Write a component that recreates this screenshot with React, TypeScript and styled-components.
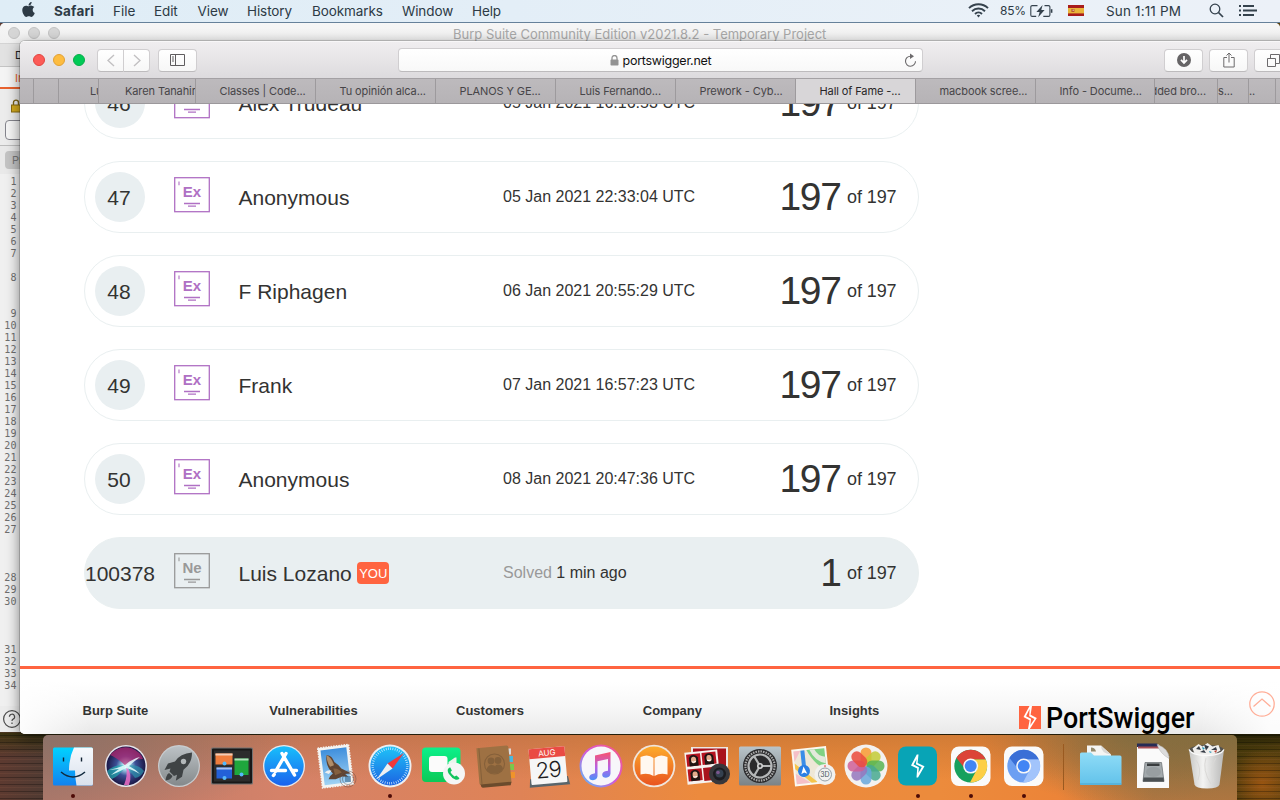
import React from 'react';
import styled, { createGlobalStyle, css } from 'styled-components';
import { FaApple } from 'react-icons/fa';

const Global = createGlobalStyle`
  * { box-sizing: border-box; }
  html, body { margin: 0; padding: 0; overflow: hidden; }
  body { font-family: "Liberation Sans", Arial, sans-serif; color: #333332; }
  svg { display: block; }
`;

const ui = css`
  font-family: Inter, "Helvetica Neue", sans-serif;
`;

const Desktop = styled.div`
  position: relative;
  width: 1280px;
  height: 800px;
  overflow: hidden;
  background:
    repeating-linear-gradient(180deg, rgba(0, 0, 0, 0.28) 0 1px, transparent 1px 3px, rgba(190, 120, 90, 0.1) 3px 4px, transparent 4px 7px),
    radial-gradient(ellipse 36px 34px at 1262px 784px, rgba(200, 100, 20, 0.6), transparent),
    linear-gradient(180deg, transparent 732px, rgba(50, 48, 8, 0.8) 733px, transparent 756px),
    linear-gradient(90deg, #5d3a30 0, #4f3a32 44px, #6f5c50 200px, #8a4b22 1100px, #4a3a0c 1240px, #5a4210 1280px);
`;

const MenuBar = styled.header`
  ${ui}
  height: 23px;
  display: flex;
  align-items: center;
  justify-content: space-between;
  padding: 0 23px 1px 20px;
  font-size: 13.5px;
  color: #2d3a45;
  background: linear-gradient(90deg, #dfedf6, #e3eef7 40%, #eaf1f8 80%, #ecf1f8);
  border-bottom: 1px solid #66819a;
`;

const MenuGroup = styled.div`
  display: flex;
  align-items: center;
  height: 22px;
`;

const MenuItem = styled.span<{ $w: number; $bold?: boolean; $ls?: number }>`
  width: ${p => p.$w}px;
  white-space: nowrap;
  font-weight: ${p => (p.$bold ? 700 : 400)};
  letter-spacing: ${p => p.$ls ?? 0}px;
`;

const AppleMark = styled.span`
  width: 34px;
  padding-bottom: 2px;
`;

const StatusIcon = styled.span<{ $gap: number }>`
  margin-left: ${p => p.$gap}px;
`;

const StatusText = styled.span<{ $gap: number; $size: number; $w: number; $ls: number }>`
  margin-left: ${p => p.$gap}px;
  font-size: ${p => p.$size}px;
  width: ${p => p.$w}px;
  letter-spacing: ${p => p.$ls}px;
  white-space: nowrap;
`;

const BurpWindow = styled.section`
  ${ui}
  position: absolute;
  left: 0;
  top: 23px;
  width: 1280px;
  height: 709px;
  background: #ececec;
  border-radius: 5px 5px 0 0;
  overflow: hidden;
`;

const BurpTitle = styled.div`
  height: 21px;
  display: flex;
  align-items: center;
  background: linear-gradient(#f6f6f6, #f0f0f0);
  border-bottom: 1px solid #d4d4d4;
  padding-left: 8px;
`;

const DimLight = styled.i`
  width: 12px;
  height: 12px;
  border-radius: 50%;
  background: #d6d6d6;
  border: 1px solid #c3c3c3;
  margin-right: 8px;
`;

const BurpName = styled.span`
  margin-left: 385px;
  padding-top: 2px;
  font-size: 13px;
  color: #a9a9a9;
  white-space: nowrap;
`;

const BurpTab = styled.div<{ $hot?: boolean }>`
  height: ${p => (p.$hot ? 22 : 23)}px;
  padding-left: 15px;
  line-height: 22px;
  font-size: 11px;
  color: ${p => (p.$hot ? '#e8622f' : '#222')};
  background: ${p => (p.$hot ? '#f4f4f4' : '#e2e2e2')};
  border-bottom: ${p => (p.$hot ? '2px solid #e8622f' : '1px solid #c4c4c4')};
`;

const LockRow = styled.div`
  height: 31px;
  padding: 10px 0 0 11px;
`;

const BurpField = styled.div`
  margin-left: 5px;
  height: 20px;
  border: 1px solid #85858d;
  border-radius: 4px;
  background: #f5f5f5;
`;

const BurpPretty = styled.div`
  margin-top: 5px;
  border-top: 1px solid #bdbdbd;
  background: #e9e9e9;
  padding: 5px 0 5px 5px;
  height: 29px;
`;

const PrettyButton = styled.div`
  height: 18px;
  border-radius: 4px;
  background: #c4c4c4;
  color: #777;
  font-size: 11px;
  line-height: 19px;
  padding-left: 7px;
`;

const Gutter = styled.div`
  width: 20px;
  height: 532px;
  padding-top: 2px;
  background: #f0f0f0;
  font-family: "DejaVu Sans Mono", monospace;
  font-size: 10px;
  color: #6f6f6f;
`;

const LineNo = styled.div<{ $h: number }>`
  height: ${p => p.$h}px;
  line-height: 12px;
  letter-spacing: 0.4px;
  padding-right: 3px;
  text-align: right;
`;

const BurpHelp = styled.div`
  padding: 3px 0 0 2px;
  height: 26px;
`;

const Browser = styled.section`
  position: absolute;
  left: 20px;
  top: 41px;
  width: 1290px;
  height: 693px;
  display: flex;
  flex-direction: column;
  border-radius: 5px;
  overflow: hidden;
  background: #fff;
`;

const BrowserShadow = styled.div`
  position: absolute;
  left: 20px;
  top: 41px;
  width: 1290px;
  height: 693px;
  border-radius: 5px;
  box-shadow: 0 0 0 1px rgba(0, 0, 0, 0.16), 0 4px 14px rgba(0, 0, 0, 0.5);
`;

const Toolbar = styled.div`
  height: 37px;
  flex: none;
  display: flex;
  align-items: center;
  padding-left: 13px;
  background: linear-gradient(#f0eef0, #dddbde);
  border-top: 1px solid #f8f7f8;
`;

const Light = styled.i<{ $c: string; $b: string }>`
  width: 12px;
  height: 12px;
  border-radius: 50%;
  background: ${p => p.$c};
  border: 1px solid ${p => p.$b};
  margin-right: 8px;
`;

const ToolButton = styled.div<{ $w: number; $ml?: number; $side?: 'l' | 'r' }>`
  width: ${p => p.$w}px;
  height: 23px;
  flex: none;
  margin-left: ${p => p.$ml ?? 0}px;
  display: flex;
  align-items: center;
  justify-content: center;
  background: linear-gradient(#ffffff, #f7f7f7);
  border: 1px solid #d0ced0;
  border-bottom-color: #bdbbbd;
  border-left-width: ${p => (p.$side === 'r' ? 0 : 1)}px;
  border-radius: ${p => (p.$side === 'l' ? '4px 0 0 4px' : p.$side === 'r' ? '0 4px 4px 0' : '4px')};
`;

const Address = styled.div`
  ${ui}
  width: 525px;
  height: 24px;
  flex: none;
  margin-left: 201px;
  padding: 0 5px 0 211px;
  display: flex;
  align-items: center;
  font-size: 12.5px;
  color: #111;
  background: linear-gradient(#ffffff, #f8f8f8);
  border: 1px solid #d0ced0;
  border-bottom-color: #bdbbbd;
  border-radius: 4px;
`;

const Host = styled.span`
  flex: 1;
  padding-left: 3.5px;
  letter-spacing: -0.26px;
`;

const TabBar = styled.nav`
  ${ui}
  height: 26px;
  flex: none;
  display: flex;
  border-top: 1px solid #a4a1a4;
  border-bottom: 1px solid #9b989b;
  background: #bab7ba;
`;

const Tab = styled.div<{ $w: number; $active?: boolean; $pad?: number; $end?: boolean }>`
  width: ${p => p.$w}px;
  flex: none;
  height: 24px;
  overflow: hidden;
  display: flex;
  justify-content: ${p => (p.$end ? 'flex-end' : 'flex-start')};
  padding: ${p => (p.$end ? `0 ${p.$pad ?? 0}px 0 0` : `0 0 0 ${p.$pad ?? 23.5}px`)};
  line-height: 24px;
  font-size: 11px;
  white-space: nowrap;
  letter-spacing: -0.1px;
  color: ${p => (p.$active ? '#272527' : '#474548')};
  background: ${p => (p.$active ? '#d8d6d8' : 'linear-gradient(#bdbabd, #b6b3b6)')};
  border-right: 1px solid #9d9a9d;
`;

const Page = styled.main`
  flex: 1;
  overflow: hidden;
  display: flex;
  flex-direction: column;
`;

const Board = styled.div`
  width: 835px;
  margin: -37px 0 0 64px;
  display: flex;
  flex-direction: column;
  gap: 22px;
`;

const Row = styled.div<{ $me?: boolean }>`
  height: 72px;
  display: grid;
  grid-template-columns: 70px 64px 265px 1fr auto;
  align-items: center;
  padding-right: 21.5px;
  border: 1px solid #e9eff0;
  border-radius: 36px;
  background: ${p => (p.$me ? '#e9eff1' : '#fff')};
`;

const Rank = styled.div<{ $me?: boolean }>`
  width: ${p => (p.$me ? 70 : 50)}px;
  height: 50px;
  margin-left: ${p => (p.$me ? 0 : 10)}px;
  padding: ${p => (p.$me ? '1px 0 0 0' : '1px 2px 0 0')};
  border-radius: 25px;
  background: #e9eff1;
  display: flex;
  align-items: center;
  justify-content: center;
  font-size: 21px;
`;

const Badge = styled.div`
  padding: 0 0 4px 19px;
`;

const Name = styled.div`
  padding: 1px 0 0 19.5px;
  font-size: 21px;
  display: flex;
  align-items: center;
  white-space: nowrap;
`;

const You = styled.span`
  margin: -1px 0 0 5.5px;
  width: 32px;
  height: 22px;
  border-radius: 4px;
  background: #ff6440;
  color: #fff;
  font-size: 13px;
  line-height: 23px;
  text-align: center;
`;

const When = styled.div`
  padding-left: 19px;
  margin-top: -1px;
  font-size: 16px;
  white-space: nowrap;
`;

const Muted = styled.span`
  color: #999;
`;

const Score = styled.div`
  display: flex;
  align-items: center;
  font-size: 18px;
  white-space: nowrap;
`;

const Big = styled.span`
  font-size: 39px;
  line-height: 44px;
  letter-spacing: -1.2px;
  margin-right: 6.2px;
`;

const Of = styled.span`
  letter-spacing: -0.1px;
`;

const Footer = styled.footer`
  margin-top: 57px;
  height: 68px;
  flex: none;
  border-top: 3px solid #ff6440;
  display: flex;
  background:
    linear-gradient(90deg, rgba(255, 255, 255, 0.85), transparent 70px 1180px, rgba(255, 255, 255, 0.85) 1250px),
    linear-gradient(#fff 20%, #f7f7f7 60%, #e9e9e9);
`;

const FootHead = styled.div`
  width: 186.75px;
  flex: none;
  padding-top: 34px;
  font-size: 13px;
  font-weight: 700;
`;

const FootCols = styled.div`
  display: flex;
  padding-left: 62.5px;
  width: 999px;
  flex: none;
`;

const Logo = styled.div`
  display: flex;
  padding-top: 37px;
  width: 230px;
  flex: none;
`;

const LogoText = styled.span`
  font-family: Roboto, sans-serif;
  font-weight: 500;
  font-size: 29.5px;
  line-height: 24px;
  color: #000;
  margin-left: 5px;
  transform-origin: left;
  transform: scaleX(0.91);
  white-space: nowrap;
`;

const ToTop = styled.div`
  padding-top: 22px;
`;

const Dock = styled.div`
  position: absolute;
  left: 43px;
  top: 735px;
  width: 1194px;
  height: 65px;
  padding-left: 3.6px;
  display: flex;
  border-radius: 5px 5px 0 0;
  background:
    radial-gradient(ellipse 230px 90px at 100% 0, rgba(120, 108, 64, 0.75), transparent),
    radial-gradient(ellipse 150px 70px at 91% 0, rgba(125, 108, 66, 0.7), transparent),
    radial-gradient(ellipse 260px 90px at 0 0, rgba(138, 114, 106, 0.95), transparent),
    linear-gradient(180deg, rgba(150, 90, 40, 0.3), transparent 70%),
    linear-gradient(90deg, #b4796a 0, #d58269 20%, #df8356 40%, #ec8a3d 55%, #ec8b3c 75%, #ec8438 85%, #b97841 93%, #bb7840 100%);
`;

const DockCell = styled.div<{ $running?: boolean }>`
  width: 52.85px;
  flex: none;
  height: 65px;
  padding: 8.5px 0 0 4.4px;
  position: relative;
  ${p => p.$running && css`
    &::after {
      content: '';
      position: absolute;
      left: 24.4px;
      top: 59px;
      width: 4px;
      height: 4px;
      border-radius: 50%;
      background: #4d0b06;
    }
  `}
`;

const DockLine = styled.div`
  width: 1px;
  height: 46px;
  margin: 9px 11px 0 12px;
  background: #9a5a20;
`;

/* ---------- icons ---------- */

const Wifi = () => (
  <svg width="21" height="15" viewBox="0 0 21 15" fill="none" stroke="#35424d" strokeWidth="1.9">
    <path d="M1 5.2 A13.5 13.5 0 0 1 20 5.2" />
    <path d="M4 8.2 A9.3 9.3 0 0 1 17 8.2" />
    <path d="M7 11 A5 5 0 0 1 14 11" />
    <path d="M8.8 12.4 L10.5 14.4 L12.2 12.4 A2.6 2.6 0 0 0 8.8 12.4Z" fill="#35424d" stroke="none" />
  </svg>
);

const Battery = () => (
  <svg width="23" height="14" viewBox="0 0 23 14" fill="none" stroke="#35424d" strokeWidth="1.1">
    <path d="M7.5 1.6H2.2a1.4 1.4 0 0 0-1.4 1.4v8a1.4 1.4 0 0 0 1.4 1.4h4M14.5 1.6h4a1.4 1.4 0 0 1 1.4 1.4v8a1.4 1.4 0 0 1-1.4 1.4h-5.2" />
    <path d="M21.6 5.2v3.6" strokeWidth="1.6" />
    <path d="M12.6 1 6.4 8h3.2l-1.4 5.2L14.6 6h-3.3z" fill="#35424d" stroke="none" />
  </svg>
);

const Flag = () => (
  <svg width="16" height="11" viewBox="0 0 16 11">
    <rect width="16" height="11" fill="#a81c1c" />
    <rect y="3" width="16" height="5.4" fill="#e9b53a" />
    <rect x="3.4" y="4" width="3" height="3" fill="#b8562e" />
    <rect x="4.6" y="4.6" width="1.2" height="1.2" fill="#f2dcc0" />
  </svg>
);

const Search = () => (
  <svg width="15" height="15" viewBox="0 0 15 15" fill="none" stroke="#35424d" strokeWidth="1.3">
    <circle cx="6" cy="6" r="4.8" />
    <path d="M9.5 9.5 14 14" strokeWidth="1.7" />
  </svg>
);

const ListIcon = () => (
  <svg width="18" height="12" viewBox="0 0 18 12" fill="#35424d">
    <path d="M0 0h2v2H0zM4 0h11v2H4zM0 4.5h2v2H0zM4 4.5h14v2H4zM0 9h2v2H0zM4 9h11v2H4z" />
  </svg>
);

const Chevron = ({ flip }: { flip?: boolean }) => (
  <svg width="8" height="13" viewBox="0 0 8 13" fill="none" stroke="#c2c0c2" strokeWidth="1.4">
    <path d={flip ? 'M1 1 7 6.5 1 12' : 'M7 1 1 6.5 7 12'} />
  </svg>
);

const Sidebar = () => (
  <svg width="15" height="12" viewBox="0 0 15 12" fill="none" stroke="#5f5d5f" strokeWidth="1">
    <path d="M.5.5h14v11H.5zM5.5.5v11M2 3h2M2 5h2M2 7h2" />
  </svg>
);

const Padlock = () => (
  <svg width="9" height="11" viewBox="0 0 9 11">
    <rect x="0.5" y="4.6" width="8" height="6" rx="0.8" fill="#939393" />
    <path d="M2 5V3a2.5 2.5 0 0 1 5 0v2" fill="none" stroke="#939393" strokeWidth="1.3" />
  </svg>
);

const Reload = () => (
  <svg width="13" height="15" viewBox="0 0 13 15" fill="none" stroke="#6c6a6c" strokeWidth="1.1">
    <path d="M7 3.2H6.4A5 5 0 1 0 11.5 8.2" />
    <path d="M6 .4 10 3.2 6 6z" fill="#6c6a6c" stroke="none" />
  </svg>
);

const Download = () => (
  <svg width="14" height="14" viewBox="0 0 14 14">
    <circle cx="7" cy="7" r="7" fill="#666466" />
    <path d="M7 3v6.5M4 6.8 7 10l3-3.2" fill="none" stroke="#fff" strokeWidth="1.7" />
  </svg>
);

const Share = () => (
  <svg width="12" height="16" viewBox="0 0 12 16" fill="none" stroke="#6c6a6c" strokeWidth="1">
    <path d="M4 5.5H.8v9.500h10.400V5.500H8M6 10.500V1M3.500 3.500 6 1l2.500 2.500" />
  </svg>
);

const TabsIcon = () => (
  <svg width="13" height="13" viewBox="0 0 13 13" fill="none" stroke="#6c6a6c" strokeWidth="1">
    <path d="M.5 4.500h8v8h-8zM3.500 4.500v-4h9v9h-4" />
  </svg>
);

const LevelBadge = ({ code, color }: { code: string; color: string }) => (
  <svg width="36" height="36" viewBox="0 0 36 36" fill="none" stroke={color}>
    <rect x="0.7" y="0.7" width="34.6" height="34" strokeWidth="1.3" />
    <path d="M5 4.500v3.700" strokeWidth="1.100" />
    <path d="M10 26.500h16M14 29.200h8" strokeWidth="1.300" />
    <text x="18" y="20" textAnchor="middle" fontFamily="Liberation Sans" fontWeight="700" fontSize="15" fill={color} stroke="none">{code}</text>
  </svg>
);

const GoldLock = () => (
  <svg width="10" height="14" viewBox="0 0 10 14">
    <rect x="0.5" y="6" width="9" height="7" fill="#d4aa1d" stroke="#8a6c10" />
    <path d="M2.500 6V3.600a2.500 2.500 0 0 1 5 0V6" fill="none" stroke="#7d6415" strokeWidth="1.400" />
  </svg>
);

const Help = () => (
  <svg width="20" height="20" viewBox="0 0 20 20" fill="none" stroke="#4a4a4a" strokeWidth="1.2">
    <circle cx="10" cy="10" r="8.400" />
    <path d="M7.400 7.800a2.600 2.600 0 1 1 3.800 2.300c-.9.5-1.200.9-1.200 2M10 13.400v1.600" />
  </svg>
);

const LogoMark = () => (
  <svg width="22" height="23" viewBox="0 0 22 23">
    <rect width="22" height="23" fill="#ff6440" />
    <path d="M10.500 0h2.500L11.600 8.800 17.800 12 10.800 23H9L10.600 14.200 4.500 11z" fill="#fff" />
    <path d="M10.600 3 7 10.200 12 12.700 11.400 19 15.400 12.900 10.200 10.200z" fill="#ff6440" />
  </svg>
);

const TopArrow = () => (
  <svg width="26" height="26" viewBox="0 0 26 26" fill="none" stroke="#ffae98" strokeWidth="1.3">
    <circle cx="13" cy="13" r="12.200" />
    <path d="M4.500 15.500 13 8l8.500 7.500" />
  </svg>
);

const S = ({ children }: { children: React.ReactNode }) => (
  <svg width="44" height="46" viewBox="0 0 44 46" overflow="visible">{children}</svg>
);

const Finder = () => (
  <S>
    <defs>
      <linearGradient id="fb" x2="0" y2="1"><stop stopColor="#00d2ff" /><stop offset="1" stopColor="#1282f0" /></linearGradient>
      <linearGradient id="fw" x2="0" y2="1"><stop stopColor="#f6f9fd" /><stop offset="1" stopColor="#d9e1ec" /></linearGradient>
    </defs>
    <rect x="2" y="3.500" width="40" height="38" rx="1.500" fill="url(#fb)" />
    <path d="M23 3.500h17.500a1.500 1.500 0 0 1 1.500 1.500v35a1.500 1.500 0 0 1-1.500 1.500H25.500q-1.500-8-1.500-15h-6q0-13 5-23z" fill="url(#fw)" />
    <path d="M12.500 13.500v4M30.500 13.500v4" stroke="#123" strokeWidth="1.400" />
    <path d="M10 28q12 10 24 0" fill="none" stroke="#122a3e" strokeWidth="1.500" />
  </S>
);

const Siri = () => (
  <S>
    <defs>
      <radialGradient id="si"><stop stopColor="#fff" /><stop offset=".2" stopColor="#9fd6ea" /><stop offset=".5" stopColor="#3c4f96" /><stop offset="1" stopColor="#1b1846" /></radialGradient>
      <clipPath id="sc"><circle cx="22" cy="22" r="19.500" /></clipPath>
    </defs>
    <circle cx="22" cy="22" r="21" fill="#e6e4ea" />
    <circle cx="22" cy="22" r="19.500" fill="url(#si)" />
    <g clipPath="url(#sc)">
      <path d="M6 11q9-10 21-7 10 4 12 11-9 0-17 7Q12 13 6 11z" fill="#b92a72" opacity=".7" />
      <path d="M3 27q9-8 19-5-8 11-14 13-4-3-5-8z" fill="#20b3b5" opacity=".65" />
      <path d="M22 22q12-3 18 5-3 6-9 7z" fill="#2c93ad" opacity=".7" />
      <path d="M22 22q7 8 3 19h-5q4-9 2-19z" fill="#ef6fc8" opacity=".85" />
      <path d="M5 26q9-2 16-5 7-6 15-8-8 6-11 9 6 3 11 8-9-5-14-6-9 5-15 7 5-4 8-6z" fill="#e8ffff" opacity=".85" />
    </g>
  </S>
);

const Launchpad = () => (
  <S>
    <defs><linearGradient id="lp" x2="0" y2="1"><stop stopColor="#bcc2c6" /><stop offset="1" stopColor="#84898b" /></linearGradient></defs>
    <circle cx="22" cy="22" r="21" fill="#c9cdd0" />
    <circle cx="22" cy="22" r="19.800" fill="url(#lp)" />
    <path d="M35 8.500q-12 1-17 9l-7 2-3.500 6.500 6-1.500-1 3 4.500 4.500 3-1.300-1.200 6 6.200-4 1.500-7Q35 20 35 8.500z" fill="#3f4345" />
    <circle cx="26.500" cy="17.500" r="2.700" fill="#b3b8ba" />
    <path d="M12 29q-3 2-3.500 7.500Q14 36 15.500 32z" fill="#3f4345" />
  </S>
);

const Mission = () => (
  <S>
    <rect x="1" y="3.500" width="42" height="37" rx="1.500" fill="#727272" />
    <rect x="2" y="4.500" width="40" height="35" rx="1" fill="#181818" />
    <rect x="4" y="6.500" width="36" height="31" fill="#2c2c2c" />
    <rect x="5.500" y="9.500" width="17" height="11" fill="#ef7d3d" /><rect x="5.500" y="9.500" width="17" height="2" fill="#f2cdb8" />
    <rect x="6.500" y="23.500" width="15.500" height="11" fill="#2360d8" /><rect x="6.500" y="23.500" width="15.500" height="2" fill="#a8c0ee" />
    <rect x="24.500" y="14.500" width="14" height="16.500" fill="#1fa73d" /><rect x="24.500" y="14.500" width="14" height="2" fill="#b4e2bc" />
    <g fill="#55b8fa"><circle cx="14.500" cy="19.500" r="2" /><circle cx="31.500" cy="30.500" r="2" /><circle cx="14.500" cy="34" r="2" /></g>
  </S>
);

const Store = () => (
  <S>
    <defs><linearGradient id="as" x2="0" y2="1"><stop stopColor="#18bffb" /><stop offset="1" stopColor="#1a62ee" /></linearGradient></defs>
    <circle cx="22" cy="22" r="21" fill="#e7e9ee" />
    <circle cx="22" cy="22" r="19.700" fill="url(#as)" />
    <g stroke="#fff" strokeWidth="3.400" strokeLinecap="round" fill="none">
      <path d="M24 9.500 13.500 27.500M20 9.500 32.500 31M9.500 26.500h14M30.500 26.500h4M12.200 30.500l-.8 1" />
    </g>
  </S>
);

const Mail = () => (
  <S>
    <defs><linearGradient id="ml" x2="0" y2="1"><stop stopColor="#3f8fdc" /><stop offset="1" stopColor="#9fd2f4" /></linearGradient></defs>
    <g transform="rotate(-7 22 22)">
      <rect x="5" y="2" width="31" height="40" fill="#f4f4f2" stroke="#f4f4f2" strokeWidth="1.600" strokeDasharray="1.500 1.100" />
      <rect x="7.500" y="4.500" width="26" height="35" fill="url(#ml)" />
      <path d="M13 10q5 0 7 8 4 3 6 7l9 6-6 0 3 3-6-1-7 2-7-1 2-3 3-2q-7-9-4-19z" fill="#5f4432" />
      <path d="M13 10q5 3 6 11l-4 1q-3-6-2-12z" fill="#b08d68" />
      <path d="M18 24q5 0 8 5l-7 2z" fill="#84603f" />
      <path d="M9 27q4-3 7-1l-3 3z" fill="#eee" />
    </g>
    <circle cx="33" cy="35" r="8" fill="none" stroke="#6b5146" strokeWidth=".8" opacity=".6" />
    <circle cx="33" cy="35" r="5.500" fill="none" stroke="#4a4a52" strokeWidth=".8" opacity=".6" />
    <rect x="30" y="32" width="6" height="6" fill="#2b5579" opacity=".5" />
  </S>
);

const Compass = () => (
  <S>
    <defs><linearGradient id="sf" x2="0" y2="1"><stop stopColor="#1fc4f8" /><stop offset="1" stopColor="#1c63e2" /></linearGradient></defs>
    <circle cx="22" cy="22" r="21.500" fill="#edeff2" />
    <circle cx="22" cy="22" r="19.600" fill="url(#sf)" />
    <circle cx="22" cy="22" r="17.300" fill="none" stroke="#d6efff" strokeWidth="2.400" strokeDasharray=".7 1.560" />
    <path d="M36 9 24.500 24.500 19.500 19.500z" fill="#f0383b" />
    <path d="M8.500 35.500 19.500 19.500 24.500 24.500z" fill="#eef0f2" />
  </S>
);

const FaceTime = () => (
  <S>
    <defs><linearGradient id="ft" x2="0" y2="1"><stop stopColor="#0cf08a" /><stop offset="1" stopColor="#0bc957" /></linearGradient></defs>
    <rect x="1" y="3.500" width="38.500" height="34.500" rx="4" fill="url(#ft)" />
    <rect x="8" y="12" width="18.500" height="16" rx="3" fill="#fbfbfb" />
    <path d="M27.500 18 34 13.500h1.500v12l-8-3z" fill="#e9f4ec" />
    <circle cx="33" cy="29.500" r="11" fill="#f4f5f5" />
    <path d="M27.300 24.500q-1.400 2 .5 5.300 3 4.600 7 6 2.600.4 3.700-1.500l-3-2.800-2 1q-3-1.800-4-4.500l1.400-1.400-1.800-3.400z" fill="#10c45c" />
  </S>
);

const Contacts = () => (
  <S>
    <path d="M33 4.500h4v6H35z" fill="#d9dadb" /><path d="M34 12h5v6h-5z" fill="#49b8de" /><path d="M35 20h5v6h-5z" fill="#7cc84c" /><path d="M36 28h5v6h-5z" fill="#f0932b" />
    <g transform="rotate(-5 22 22)">
      <path d="M4 2.500h30a2 2 0 0 1 2 2V40H6q-2 0-2-2z" fill="#9e7143" />
      <path d="M5 39h31l-1 3.500H7q-2-1-2-3.500z" fill="#6b4b2c" />
      <path d="M6.500 3v36" stroke="#85603a" />
    </g>
    <circle cx="20.500" cy="20" r="10" fill="none" stroke="#85603a" strokeWidth="1.100" />
    <g fill="#84603a"><circle cx="17" cy="17" r="3.400" /><circle cx="24" cy="16.500" r="3.400" /><path d="M12.500 26q1-5 5-5t3.500 2q0-2.500 3-2.500 4 0 5 4-3 5-8 5-6 0-8.500-3.500z" /></g>
  </S>
);

const Calendar = () => (
  <S>
    <g transform="rotate(-5 22 22)">
      <path d="M2 33.500h38l1.500 8.500H1z" fill="#59656b" />
      <rect x="3" y="3.500" width="36" height="36" rx="1" fill="#f6f6f6" />
      <path d="M3 4.500a1 1 0 0 1 1-1h34a1 1 0 0 1 1 1v9H3z" fill="#ea4b44" />
      <text x="21" y="11.500" textAnchor="middle" fontFamily="Inter" fontSize="8" fill="#fff">AUG</text>
      <text x="21" y="33.500" textAnchor="middle" fontFamily="Inter" fontWeight="300" fontSize="22" letterSpacing="-.8" fill="#1d1d1f">29</text>
    </g>
  </S>
);

const Music = () => (
  <S>
    <defs>
      <linearGradient id="mr" x1="1" y1="0" x2="0" y2="1"><stop stopColor="#fb5a76" /><stop offset=".5" stopColor="#d457d8" /><stop offset="1" stopColor="#4fc5fa" /></linearGradient>
      <linearGradient id="mn" x2="0" y2="1"><stop stopColor="#f9526c" /><stop offset=".55" stopColor="#b761e6" /><stop offset="1" stopColor="#4a92f8" /></linearGradient>
    </defs>
    <circle cx="22" cy="22" r="21.500" fill="url(#mr)" />
    <circle cx="22" cy="22" r="19.500" fill="#f7f6fa" />
    <path d="M16 11.500 31.500 8v21.500q-.3 3.800-4.500 4.200-3.800 0-3.800-3 .2-3 4-3.600l1.800-.4V15l-10.500 2.300v15q-.4 3.600-4.500 4-3.700 0-3.800-3 .3-3 4-3.600l1.800-.4z" fill="url(#mn)" />
  </S>
);

const Books = () => (
  <S>
    <defs><linearGradient id="bk" x2="0" y2="1"><stop stopColor="#fdab2c" /><stop offset="1" stopColor="#e95420" /></linearGradient></defs>
    <circle cx="22" cy="22" r="21.300" fill="#f0e5dc" />
    <circle cx="22" cy="22" r="19.500" fill="url(#bk)" />
    <path d="M21.500 14Q16 9.500 8.500 13v17.500q7.500-2 13 1.500zM22.500 14Q28 9.500 35.500 13v17.500q-7.500-2-13 1.500z" fill="#fff8f0" />
  </S>
);

const Portrait = ({ x, y }: { x: number; y: number }) => (
  <g transform={`translate(${x} ${y})`}>
    <rect width="14" height="12" fill="#b51420" />
    <path d="M2.500 12V4q1-3 4.500-3t4.500 3v8z" fill="#201614" />
    <ellipse cx="7" cy="6" rx="2.600" ry="3.300" fill="#e3ac8c" />
    <path d="M5 7.500q2 1.500 4 0" stroke="#fff" fill="none" />
  </g>
);

const PhotoBooth = () => (
  <S>
    <rect x="6" y="3" width="37" height="22" fill="#ece8e4" /><rect x="8" y="4.500" width="33" height="19" fill="#a9121c" />
    <g transform="rotate(-6 18 24)">
      <rect x="1" y="7" width="33" height="32" fill="#f6f2ee" />
      <Portrait x={2.5} y={9} /><Portrait x={18} y={9} /><Portrait x={2.5} y={24} />
      <rect x="18" y="24" width="14" height="13" fill="#a9121c" />
    </g>
    <circle cx="34.500" cy="30" r="10.500" fill="#37373b" /><circle cx="34.500" cy="30" r="6.500" fill="#1c1c20" />
    <circle cx="34.500" cy="29.500" r="4" fill="#34404f" /><circle cx="33" cy="28.500" r="1.800" fill="#7b568f" />
  </S>
);

const Prefs = () => (
  <S>
    <defs><linearGradient id="pf" x2="0" y2="1"><stop stopColor="#b9c4ca" /><stop offset="1" stopColor="#7b8387" /></linearGradient></defs>
    <rect x="1" y="2.500" width="42" height="39" rx="1.500" fill="url(#pf)" />
    <circle cx="22" cy="22" r="17" fill="#2a2a2c" />
    <circle cx="22" cy="22" r="14.600" fill="none" stroke="#aaa" strokeWidth="2.200" strokeDasharray="1.500 1.050" />
    <circle cx="22" cy="22" r="11.500" fill="none" stroke="#b5b7b8" strokeWidth="2.200" />
    <g stroke="#b5b7b8" strokeWidth="2.200"><path d="M22 22H34M22 22 16 12M22 22 16 32" /></g>
    <circle cx="22" cy="22" r="3" fill="#d3d4d5" /><circle cx="22" cy="22" r="1.400" fill="#3a3a3c" />
  </S>
);

const Maps = () => (
  <S>
    <g transform="rotate(-6 22 22)">
      <rect x="2" y="3.500" width="35" height="37" fill="#fbf8f0" />
      <rect x="4" y="5.500" width="31" height="33" fill="#eee7d6" />
      <path d="M17 5.500h18v20q-10-2-18-20z" fill="#80d284" />
      <path d="M20 5.500q5 13 15 15V14q-7-1-10-8.500z" fill="#e3e9dc" />
      <path d="M4 5.500h7L4 16zM4 28l14 10.500H4z" fill="#f5c0c8" />
      <path d="M4 17.500 25 38.500h-6L4 23.500z" fill="#f5c54b" />
      <path d="M11 5.500h4v22h-4z" fill="#3a8de8" />
      <circle cx="12.500" cy="26" r="6" fill="#2b7fe4" /><path d="M12.500 21.500 15.500 29l-3-1.500-3 1.500z" fill="#fff" />
    </g>
    <circle cx="34" cy="30.500" r="10.500" fill="#f1f1ef" />
    <circle cx="34" cy="30.500" r="6.500" fill="none" stroke="#7f8c94" strokeWidth=".8" />
    <text x="34" y="33" textAnchor="middle" fontFamily="Inter" fontSize="7" fill="#45535c">3D</text>
    <path d="M33 21.500h2l-1 2z" fill="#e33" />
  </S>
);

const petals = ['#f79a31', '#c2cb36', '#57b453', '#46a98f', '#69a8dc', '#9477bd', '#cf5f97', '#ea4b3d'];
const Photos = () => (
  <S>
    <circle cx="22" cy="22" r="21.500" fill="#f3f1f0" />
    {petals.map((c, i) => (
      <rect key={c} x="16.500" y="3.500" width="11" height="18" rx="5.500" fill={c} opacity=".85" transform={`rotate(${i * 45} 22 22)`} />
    ))}
  </S>
);

const BurpIcon = () => (
  <S>
    <rect x="2" y="2.500" width="39" height="39" rx="8" fill="#08a4b6" />
    <path d="M20.800 10.500h1.700L21.600 19 28.500 22.300 22 33.500H20.500L21.200 24.500 15 21.500z" fill="#fff" />
    <path d="M20.600 15 17.600 20.600 22.900 23.300 22.400 29 25.800 23.100 19.900 20.300z" fill="#08a4b6" />
  </S>
);

const ChromeIcon = ({ a, b, c, d }: { a: string; b: string; c: string; d: string }) => (
  <S>
    <rect x="2" y="2.500" width="39.500" height="39.500" rx="8" fill="#fafafa" />
    <circle cx="21.700" cy="22.100" r="16.400" fill={b} />
    <path d="M7.500 13.900A16.400 16.400 0 0 1 35.900 13.900L36.800 15.500H21.700a6.600 6.600 0 0 0-6.200 8.800z" fill={a} />
    <path d="M36.800 15.500A16.400 16.400 0 0 1 21 38.500L27.600 26A7 7 0 0 0 24.500 15.500z" fill={c} />
    <circle cx="21.700" cy="22.100" r="7.500" fill="#f7f7f7" />
    <circle cx="21.700" cy="22.100" r="6" fill={d} />
  </S>
);

const Folder = () => (
  <S>
    <defs><linearGradient id="fo" x2="0" y2="1"><stop stopColor="#8fdcf7" /><stop offset="1" stopColor="#62c2ea" /></linearGradient></defs>
    <path d="M8 1.500h14l10 9v10H8z" fill="#f5f5f3" /><path d="M22 1.500q0 8 10 9z" fill="#d8d8d6" />
    <path d="M12 3.500q4 0 5 4h-5z" fill="#948a6c" />
    <path d="M1 10a1.500 1.500 0 0 1 1.500-1.500H12l3 3h26a1.500 1.500 0 0 1 1.500 1.500V40a1 1 0 0 1-1 1H2a1 1 0 0 1-1-1z" fill="url(#fo)" />
    <path d="M1 40h41.500" stroke="#4ba5cf" />
  </S>
);

const DiskDoc = () => (
  <S>
    <path d="M5 0h21L37 12.500V44H5z" fill="#fafafa" />
    <path d="M5-.5h20l3 3.500H5z" fill="#272c56" /><path d="M6 2.500h21l3 2H6z" fill="#a94f55" />
    <path d="M25 .5q3 9 12 14Q37 4.500 25 .5z" fill="#dcdcdc" stroke="#b5b5b5" strokeWidth=".5" />
    <path d="M13 18.500h16.500l2.500 19H11z" fill="#a4aaad" stroke="#717679" strokeWidth=".8" />
    <rect x="15" y="19.500" width="12.500" height="2.500" fill="#393c3e" /><ellipse cx="21.500" cy="28" rx="7.500" ry="5" fill="#989ea1" />
    <path d="M11.500 33.500H31.500l.5 4H11z" fill="#4b5053" />
  </S>
);

const Trash = () => (
  <S>
    <defs><linearGradient id="tr"><stop stopColor="#c7c7c5" /><stop offset=".4" stopColor="#f3f3f2" /><stop offset="1" stopColor="#b9b9b8" /></linearGradient></defs>
    <path d="M4 5.500h35L34.500 40.500q-1 4-12.500 4T9.500 40.500z" fill="url(#tr)" />
    <ellipse cx="21.500" cy="5.500" rx="17" ry="4.500" fill="#55534f" />
    <path d="M7.500 4.500 13.500 0l4 2.500 5-3.500 5 3.500 6-1.500 2 5.500-7 4-8 2-11-3z" fill="#f0efed" />
    <path d="m11 5 3-3 2 4zM19 .5l5 2-3 4zM26 6l5-3 1 3zM15 8l4-2 2 3z" fill="#353b45" />
    <path d="m17 3 3 1-2 2zM24 7l3 1-2 1z" fill="#2a95b5" /><path d="m29 7 3-1-1 3z" fill="#ba4032" />
    <path d="M11 16q6 8 2 20M21 14q-4 12 5 26M31 14q-7 10-2 24" fill="none" stroke="#dad9d7" />
    <path d="M4 5.500Q7 11.500 21.500 11.500T39 5.500" fill="none" stroke="#fafafa" strokeWidth="1.300" />
  </S>
);

/* ---------- data ---------- */

const menu = [
  { t: 'Safari', w: 59, b: true, ls: 0.2 },
  { t: 'File', w: 41, ls: 0 },
  { t: 'Edit', w: 43.5, ls: -0.1 },
  { t: 'View', w: 49.5, ls: -0.1 },
  { t: 'History', w: 65, ls: -0.1 },
  { t: 'Bookmarks', w: 90, ls: -0.1 },
  { t: 'Window', w: 70, ls: -0.1 },
  { t: 'Help', w: 40, ls: -0.1 },
];

const tabs: { t: string; w: number; pad?: number; active?: boolean; end?: boolean }[] = [
  { t: '', w: 14, pad: 0 },
  { t: '', w: 25, pad: 0 },
  { t: 'Luis', w: 40, pad: 31 },
  { t: 'Karen Tanahiry', w: 97, pad: 26 },
  { t: 'Classes | Code...', w: 120 },
  { t: 'Tu opinión alca...', w: 120 },
  { t: 'PLANOS Y GE...', w: 120 },
  { t: 'Luis Fernando...', w: 120 },
  { t: 'Prework - Cyb...', w: 120 },
  { t: 'Hall of Fame -...', w: 120, active: true },
  { t: 'macbook scree...', w: 120 },
  { t: 'Info - Docume...', w: 119 },
  { t: 'dded bro...', w: 63, end: true, pad: 11 },
  { t: 's...', w: 31, pad: 0 },
  { t: '..', w: 27, pad: 0 },
  { t: '', w: 30, pad: 0 },
];

const rows = [
  { n: '46', name: 'Alex Trudeau', when: '05 Jan 2021 16:16:53 UTC' },
  { n: '47', name: 'Anonymous', when: '05 Jan 2021 22:33:04 UTC' },
  { n: '48', name: 'F Riphagen', when: '06 Jan 2021 20:55:29 UTC' },
  { n: '49', name: 'Frank', when: '07 Jan 2021 16:57:23 UTC' },
  { n: '50', name: 'Anonymous', when: '08 Jan 2021 20:47:36 UTC' },
];

const wrapped: Record<number, number> = { 7: 24, 8: 36, 27: 48, 30: 48 };
const lines = Array.from({ length: 34 }, (_, i) => i + 1);

const dockApps: { icon: React.ReactNode; run?: boolean }[] = [
  { icon: <Finder />, run: true },
  { icon: <Siri /> },
  { icon: <Launchpad /> },
  { icon: <Mission /> },
  { icon: <Store /> },
  { icon: <Mail /> },
  { icon: <Compass />, run: true },
  { icon: <FaceTime /> },
  { icon: <Contacts /> },
  { icon: <Calendar /> },
  { icon: <Music /> },
  { icon: <Books /> },
  { icon: <PhotoBooth /> },
  { icon: <Prefs /> },
  { icon: <Maps /> },
  { icon: <Photos /> },
  { icon: <BurpIcon />, run: true },
  { icon: <ChromeIcon a="#dc4437" b="#16a05d" c="#fdcf45" d="#4285f4" />, run: true },
  { icon: <ChromeIcon a="#3a6fd6" b="#6c9ff2" c="#a2c4fb" d="#4285f4" />, run: true },
];

export default function App() {
  return (
    <Desktop>
      <Global />
      <MenuBar>
        <MenuGroup>
          <AppleMark><FaApple size={17} /></AppleMark>
          {menu.map(m => <MenuItem key={m.t} $w={m.w} $bold={m.b} $ls={m.ls}>{m.t}</MenuItem>)}
        </MenuGroup>
        <MenuGroup>
          <Wifi />
          <StatusText $gap={11} $size={12} $w={26} $ls={-0.25}>85%</StatusText>
          <StatusIcon $gap={4}><Battery /></StatusIcon>
          <StatusIcon $gap={15}><Flag /></StatusIcon>
          <StatusText $gap={22} $size={13.5} $w={77} $ls={0.15}>Sun 1:11 PM</StatusText>
          <StatusIcon $gap={26}><Search /></StatusIcon>
          <StatusIcon $gap={15}><ListIcon /></StatusIcon>
        </MenuGroup>
      </MenuBar>

      <BurpWindow>
        <BurpTitle>
          <DimLight /><DimLight /><DimLight />
          <BurpName>Burp Suite Community Edition v2021.8.2 - Temporary Project</BurpName>
        </BurpTitle>
        <BurpTab>D</BurpTab>
        <BurpTab $hot>In</BurpTab>
        <LockRow><GoldLock /></LockRow>
        <BurpField />
        <BurpPretty><PrettyButton>Pretty</PrettyButton></BurpPretty>
        <Gutter>
          {lines.map(n => <LineNo key={n} $h={wrapped[n] ?? 12}>{n}</LineNo>)}
        </Gutter>
        <BurpHelp><Help /></BurpHelp>
      </BurpWindow>

      <BrowserShadow />
      <Browser>
        <Toolbar>
          <Light $c="#fc5b57" $b="#e2443f" /><Light $c="#fdbc40" $b="#e2a033" /><Light $c="#00ca56" $b="#08ac4a" />
          <ToolButton $w={27} $ml={4} $side="l"><Chevron /></ToolButton>
          <ToolButton $w={26} $side="r"><Chevron flip /></ToolButton>
          <ToolButton $w={39} $ml={8}><Sidebar /></ToolButton>
          <Address><Padlock /><Host>portswigger.net</Host><Reload /></Address>
          <ToolButton $w={39} $ml={241}><Download /></ToolButton>
          <ToolButton $w={39} $ml={6}><Share /></ToolButton>
          <ToolButton $w={39} $ml={6}><TabsIcon /></ToolButton>
        </Toolbar>
        <TabBar>
          {tabs.map((t, i) => (
            <Tab key={i} $w={t.w} $pad={t.pad} $active={t.active} $end={t.end}>{t.t}</Tab>
          ))}
        </TabBar>
        <Page>
          <Board>
            {rows.map(r => (
              <Row key={r.n}>
                <Rank>{r.n}</Rank>
                <Badge><LevelBadge code="Ex" color="#b070c4" /></Badge>
                <Name>{r.name}</Name>
                <When>{r.when}</When>
                <Score><Big>197</Big><Of>of 197</Of></Score>
              </Row>
            ))}
            <Row $me>
              <Rank $me>100378</Rank>
              <Badge><LevelBadge code="Ne" color="#999999" /></Badge>
              <Name>Luis Lozano<You>YOU</You></Name>
              <When><Muted>Solved</Muted> 1 min ago</When>
              <Score><Big>1</Big><Of>of 197</Of></Score>
            </Row>
          </Board>
          <Footer>
            <FootCols>
              {['Burp Suite', 'Vulnerabilities', 'Customers', 'Company', 'Insights'].map(h => <FootHead key={h}>{h}</FootHead>)}
            </FootCols>
            <Logo><LogoMark /><LogoText>PortSwigger</LogoText></Logo>
            <ToTop><TopArrow /></ToTop>
          </Footer>
        </Page>
      </Browser>

      <Dock>
        {dockApps.map((a, i) => <DockCell key={i} $running={a.run}>{a.icon}</DockCell>)}
        <DockLine />
        <DockCell><Folder /></DockCell>
        <DockCell><DiskDoc /></DockCell>
        <DockCell><Trash /></DockCell>
      </Dock>
    </Desktop>
  );
}
